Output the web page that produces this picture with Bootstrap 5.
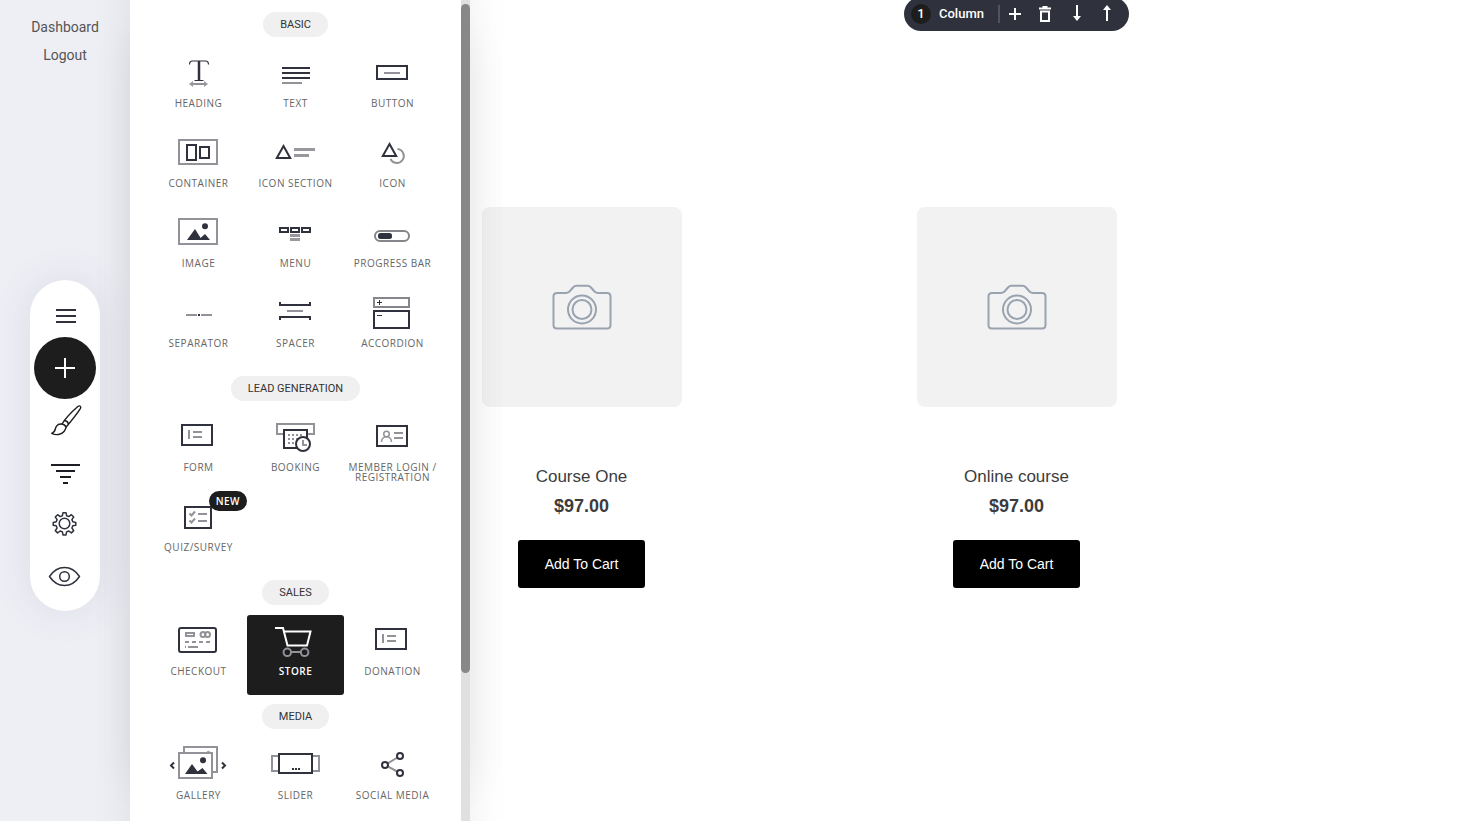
<!DOCTYPE html>
<html lang="en">
<head>
<meta charset="utf-8">
<meta name="viewport" content="width=device-width, initial-scale=1">
<title>Page Editor</title>
<link href="https://cdn.jsdelivr.net/npm/bootstrap@5.3.0/dist/css/bootstrap.min.css" rel="stylesheet">
<style>
body{font-family:"Liberation Sans",Arial,sans-serif;background:#fff;color:#3c3c3c}
.editor{height:100vh}
.rail{width:130px;background:#eeeff5}
.rail-links{padding-top:13px;font:14px/28px Roboto,sans-serif}
.rail-links a{color:#555;text-decoration:none}
.dock{width:70px;padding:10px 0 9px;border-radius:35px;background:#fff;box-shadow:0 0 40px rgba(60,65,100,.1)}
.dock button{width:62px;height:52px;padding:0;border:0;background:none;color:#2f303a}
.dock .dock-on{height:62px;margin:-5px 0;border-radius:50%;background:#1d1d1d;color:#fff;position:relative}
.panel{left:130px;top:0;bottom:0;width:340px;background:#fff;box-shadow:0 -40px 40px rgba(0,0,0,.07),0 40px 40px rgba(0,0,0,.07)}
.panel-list{padding:3px 20px 0;overflow:hidden}
.group-name{margin:9px 0 10px;padding:0 17px;border-radius:13px;background:#f0f0f0;color:#333;font:11px/25px Roboto,sans-serif}
.tiles{display:grid;grid-template-columns:repeat(3,1fr)}
.tile{height:80px;padding:0;border:0;border-radius:3px;background:none;color:#666;font:10px/10px "Open Sans",sans-serif;letter-spacing:.05em;text-transform:uppercase}
.tile svg{display:block;width:97px;height:51px}
.tile span{display:block}
.tile-on{background:#1d1d1d;color:#fff;font-weight:600}
.tile .tile-new{right:0;top:0;padding:0 7px;border-radius:10px;background:#1d1d1d;color:#fff;font-weight:600;line-height:20px}
.track{width:9px;background:#e0e0e0}
.thumb{margin-top:4px;height:calc(100% - 152px);border-radius:5px;background:#888}
svg{fill:none}
.d{stroke:#2f313c;stroke-width:2}
.g{stroke:#929298;stroke-width:2}
.df{fill:#2f313c}
.gf{fill:#98989e}
.w{fill:#fff}
.stage{padding-right:12px;overflow:hidden}
.products{max-width:870px}
.tool-row{height:207px}
.column-bar{height:34px;width:225px;margin-top:-3px;padding:0 7px;border-radius:17px;background:#2f313c;color:#fff;font:500 13px/20px Roboto,sans-serif}
.column-bar button{width:30px;height:24px;padding:0;border:0;background:none;color:#fff;display:grid;place-items:center}
.count{width:20px;height:20px;border-radius:50%;background:#1d1d1d;text-align:center}
.move-pair{margin-left:2px}
.rule{width:2px;height:18px;background:#51535e}
.photo{width:200px;height:200px;border-radius:8px;background:#f2f2f2}
.product-name{margin:58px 0 0;font-size:17px;line-height:24px;font-weight:400}
.price{font-size:18px;line-height:24px;margin:5px 0 22px;font-weight:700}
.cart-btn{height:48px;padding:0 27px;border:0;border-radius:3px;background:#000;color:#fff;font-size:14px}
</style>
</head>
<body>
<div class="editor d-flex position-relative overflow-hidden">
  <aside class="rail d-flex flex-column align-items-center flex-shrink-0">
    <nav class="rail-links d-flex flex-column align-items-center"><a href="#">Dashboard</a><a href="#">Logout</a></nav>
    <div class="dock my-auto d-flex flex-column align-items-center">
      <button type="button" aria-label="Menu"><svg width="62" height="52"><path d="M22 20h20M22 26h20M22 32h20" class="d"/></svg></button>
      <button type="button" class="dock-on" aria-label="Add element"><svg width="62" height="62"><path d="M21 31h20M31 21v20" stroke="#fff" stroke-width="2"/></svg></button>
      <button type="button" aria-label="Design"><svg width="62" height="52" stroke="#1d1d1d" stroke-width="1.400" stroke-linejoin="round"><path d="M28 30C31 25 37 18.500 43.800 12.500C45.800 11 47.600 12.500 46.300 14.700C42 21.500 36.500 28 32 33.300C31.500 31.500 30 30.300 28 30Z"/><path d="M30.500 26.500c2 .3 3.600 1.800 4 3.500"/><path d="M28 30C24.500 29.700 22 31.700 21.300 35C20.900 37 19.500 38.700 17.700 39.300C22 41.500 27.500 40.800 30 37.500C31 36 31.800 34.700 32 33.300"/></svg></button>
      <button type="button" aria-label="Layout"><svg width="62" height="52"><path d="M17 19h29M22 25h19M26 31h11M29 37h5" class="d" style="stroke:#1d1d24"/></svg></button>
      <button type="button" aria-label="Settings"><svg width="62" height="52" stroke="#2f313c" stroke-width="1.500" stroke-linejoin="round"><circle cx="30.500" cy="25.500" r="5.300"/><path d="M29 14.700h3l.6 3 2.200.9 2.600-1.900 2.300 2.300-1.800 2.600.9 2.200 3 .6v2.800l-3 .6-.9 2.200 1.800 2.600-2.300 2.300-2.600-1.900-2.200.9-.6 3h-3l-.6-3-2.200-.9-2.600 1.900-2.300-2.300 1.800-2.600-.9-2.200-3-.6v-2.800l3-.6.9-2.200-1.800-2.600 2.300-2.300 2.600 1.900 2.200-.9z"/></svg></button>
      <button type="button" aria-label="Preview"><svg width="62" height="52" stroke="#2f313c" stroke-width="1.500" stroke-linejoin="round"><path d="M15.500 26.500C19.500 20.500 24.500 17.500 30.500 17.500S41.500 20.500 45.500 26.500C41.500 32.500 36.500 35.500 30.500 35.500S19.500 32.500 15.500 26.500Z"/><circle cx="30.500" cy="26.500" r="4.800"/></svg></button>
    </div>
  </aside>

  <main class="stage flex-grow-1">
    <div class="products row g-0 mx-auto">
      <div class="col-6 d-flex flex-column align-items-center">
        <div class="tool-row"></div>
        <div class="photo d-grid align-items-center justify-content-center"><svg width="60" height="46" stroke="#99a3b0" stroke-width="2"><path d="M5 9H13.500Q16 9 17.500 7.500L21 3.500Q22.500 1.700 24.500 1.700H35.500Q37.500 1.700 39 3.500L42.500 7.500Q44 9 46.500 9H55Q58.500 9 58.500 12.500V41Q58.500 44.500 55 44.500H5Q1.500 44.500 1.500 41V12.500Q1.500 9 5 9Z"/><circle cx="30" cy="25.500" r="14"/><circle cx="30" cy="25.500" r="9.500"/></svg></div>
        <h3 class="product-name">Course One</h3>
        <p class="price">$97.00</p>
        <button type="button" class="cart-btn">Add To Cart</button>
      </div>
      <div class="col-6 d-flex flex-column align-items-center">
        <div class="tool-row">
          <div class="column-bar d-flex align-items-center">
            <span class="count">1</span><span class="ms-2 me-auto">Column</span>
            <span class="rule"></span>
            <button type="button" aria-label="Add column"><svg width="14" height="14" stroke="#fff" stroke-width="2"><path d="M1 7h12M7 1v12"/></svg></button>
            <button type="button" aria-label="Delete column"><svg width="14" height="18" stroke="#fff" stroke-width="2"><path d="M1 3.500h12M4.500 2h5M3 6.500h8v9.500H3z"/></svg></button>
            <div class="move-pair d-flex">
              <button type="button" aria-label="Move down"><svg width="14" height="18"><path d="M6 0h2v11h3l-4 5-4-5h3z" fill="#fff"/></svg></button>
              <button type="button" aria-label="Move up"><svg width="14" height="18"><path d="M6 16h2V5h3L7 0 3 5h3z" fill="#fff"/></svg></button>
            </div>
          </div>
        </div>
        <div class="photo d-grid align-items-center justify-content-center"><svg width="60" height="46" stroke="#99a3b0" stroke-width="2"><path d="M5 9H13.500Q16 9 17.500 7.500L21 3.500Q22.500 1.700 24.500 1.700H35.500Q37.500 1.700 39 3.500L42.500 7.500Q44 9 46.500 9H55Q58.500 9 58.500 12.500V41Q58.500 44.500 55 44.500H5Q1.500 44.500 1.500 41V12.500Q1.500 9 5 9Z"/><circle cx="30" cy="25.500" r="14"/><circle cx="30" cy="25.500" r="9.500"/></svg></div>
        <h3 class="product-name">Online course</h3>
        <p class="price">$97.00</p>
        <button type="button" class="cart-btn">Add To Cart</button>
      </div>
    </div>
  </main>

  <!-- Element picker slides over the page canvas -->
  <section class="panel position-absolute d-flex">
    <div class="panel-list flex-grow-1">
      <div class="d-flex justify-content-center"><h2 class="group-name">BASIC</h2></div>
      <div class="tiles">
        <button type="button" class="tile d-flex flex-column align-items-center"><svg viewBox="0 0 97 51"><path d="M39.500 17.500q0-3.500 3-3.500h13q3 0 3 3.500M49 14v19M44.500 33.500h9" stroke="#2f313c" stroke-width="1.200"/><path d="M49 14v19.500" stroke="#2f313c" stroke-width="2.500"/><path d="M41 37h15" class="g"/><path d="M39 37l4-3v6zM58 37l-4-3v6z" class="gf"/></svg><span>Heading</span></button>
        <button type="button" class="tile d-flex flex-column align-items-center"><svg viewBox="0 0 97 51"><path d="M35 21h28M35 26h28M35 31h28" class="d"/><path d="M35 36h20" class="g"/></svg><span>Text</span></button>
        <button type="button" class="tile d-flex flex-column align-items-center"><svg viewBox="0 0 97 51"><path d="M33 19h30v13H33z" class="d"/><path d="M40 26h16" class="g"/></svg><span>Button</span></button>

        <button type="button" class="tile d-flex flex-column align-items-center"><svg viewBox="0 0 97 51"><path d="M29 13h38v24H29z" class="g"/><path d="M37 18h9v15h-9zM50 20h9v11h-9z" class="d"/></svg><span>Container</span></button>
        <button type="button" class="tile d-flex flex-column align-items-center"><svg viewBox="0 0 97 51"><path d="M36.500 19L43.200 31H29.800z" class="d"/><path d="M47 21h21v3H47zM47 27h15v3H47z" class="gf"/></svg><span>Icon section</span></button>
        <button type="button" class="tile d-flex flex-column align-items-center"><svg viewBox="0 0 97 51"><path d="M53.500 22a7 7 0 1 1-7 10" class="g"/><path d="M45.500 17L52.200 29H38.800z" class="d"/></svg><span>Icon</span></button>

        <button type="button" class="tile d-flex flex-column align-items-center"><svg viewBox="0 0 97 51"><path d="M29 12h38v25H29z" class="g"/><path d="M37 33l8-11 5 8 .5 1 4.500-4 5 6z" class="df"/><circle cx="55" cy="19.300" r="3" class="df"/></svg><span>Image</span></button>
        <button type="button" class="tile d-flex flex-column align-items-center"><svg viewBox="0 0 97 51"><path d="M33 21h8v4h-8zM44 21h8v4h-8zM55 21h8v4h-8z" class="d"/><path d="M43 27h10v3H43zM43 31h10v3H43z" class="gf"/></svg><span>Menu</span></button>
        <button type="button" class="tile d-flex flex-column align-items-center"><svg viewBox="0 0 97 51"><rect x="31" y="24" width="34" height="10" rx="5" class="g" style="stroke:#85858b"/><rect x="34" y="26" width="14" height="6" rx="2.500" class="df"/></svg><span>Progress bar</span></button>

        <button type="button" class="tile d-flex flex-column align-items-center"><svg viewBox="0 0 97 51"><path d="M36 28h11M51 28h11" class="g"/><path d="M48 28h2" class="d"/></svg><span>Separator</span></button>
        <button type="button" class="tile d-flex flex-column align-items-center"><svg viewBox="0 0 97 51"><path d="M33 15v3h30v-3M33 33v-3h30v3" class="d"/><path d="M40 24h16" class="g"/></svg><span>Spacer</span></button>
        <button type="button" class="tile d-flex flex-column align-items-center"><svg viewBox="0 0 97 51"><path d="M30 11h35v9H30z" class="g" style="stroke:#85858b"/><path d="M30 24h35v17H30z" class="d"/><path d="M33 15.500h5M35.500 13v5M33 28.500h5" stroke="#2f313c"/></svg><span>Accordion</span></button>
      </div>

      <div class="d-flex justify-content-center"><h2 class="group-name">LEAD GENERATION</h2></div>
      <div class="tiles">
        <button type="button" class="tile d-flex flex-column align-items-center"><svg viewBox="0 0 97 51"><path d="M32 14h30v20H32z" class="d"/><path d="M39 19v9M43 21h9M43 26h9" class="g"/></svg><span>Form</span></button>
        <button type="button" class="tile d-flex flex-column align-items-center"><svg viewBox="0 0 97 51"><path d="M30 13h37v10H30z" class="g"/><path d="M37 19h23v18H37z" class="d w"/><path d="M41 24h14M41 28h14M41 32h9" class="g" stroke-dasharray="2 2"/><circle cx="56" cy="33" r="7" class="d w"/><path d="M56 29v5h4" class="g"/></svg><span>Booking</span></button>
        <button type="button" class="tile d-flex flex-column align-items-center"><svg viewBox="0 0 97 51"><path d="M33 15h30v20H33z" class="d"/><g class="g" style="stroke-width:1.500"><circle cx="42.500" cy="23" r="2.800"/><path d="M37.500 31c0-7 10-7 10 0"/></g><path d="M50 22h9M50 27h9" class="g"/></svg><span>Member login / registration</span></button>
        <button type="button" class="tile position-relative d-flex flex-column align-items-center"><svg viewBox="0 0 97 51"><path d="M35 16h26v21H35z" class="d"/><path d="M48 23h9M48 30h9" class="g"/><path d="M39.500 22.500l2 2 3.500-4M39.500 29.500l2 2 3.500-4" class="g"/></svg><span>Quiz/Survey</span><span class="tile-new position-absolute">New</span></button>
      </div>

      <div class="d-flex justify-content-center"><h2 class="group-name">SALES</h2></div>
      <div class="tiles">
        <button type="button" class="tile d-flex flex-column align-items-center"><svg viewBox="0 0 97 51"><rect x="29" y="13" width="37" height="24" rx="2" class="d"/><g class="g"><path d="M36 18h8v3h-8z"/><circle cx="53" cy="19.500" r="2.500"/><circle cx="57.500" cy="19.500" r="2.500"/></g><path d="M35 27h25" class="g" stroke-dasharray="4 3"/><path d="M35 32h1M38 32h10" class="g"/></svg><span>Checkout</span></button>
        <button type="button" class="tile tile-on d-flex flex-column align-items-center"><svg viewBox="0 0 97 51"><path d="M28 13h8l4.500 17.500h19.500l3.500-14H37" stroke="#fff" stroke-width="2"/><path d="M44 37h10" class="g"/><circle cx="40.300" cy="37.300" r="3.800" class="g"/><circle cx="57.600" cy="37.300" r="3.800" class="g"/></svg><span>Store</span></button>
        <button type="button" class="tile d-flex flex-column align-items-center"><svg viewBox="0 0 97 51"><path d="M32 14h30v20H32z" class="d"/><path d="M39 19v9M43 21h9M43 26h9" class="g"/></svg><span>Donation</span></button>
      </div>

      <div class="d-flex justify-content-center"><h2 class="group-name">MEDIA</h2></div>
      <div class="tiles">
        <button type="button" class="tile d-flex flex-column align-items-center"><svg viewBox="0 0 97 51"><path d="M34 13V8h33v25h-4" class="g"/><path d="M29 14h33v25H29z" class="g"/><path d="M35 35l7-10 5.500 7.500 5-3.500 5 6z" class="df"/><circle cx="53" cy="21.300" r="3" class="df"/><path d="M57 13q1-1.500 3 0" class="g" style="stroke-width:1"/><path d="M24 23.500l-3 3 3 3M72 23.500l3 3-3 3" class="d"/></svg><span>Gallery</span></button>
        <button type="button" class="tile d-flex flex-column align-items-center"><svg viewBox="0 0 97 51"><path d="M31 17h-6v15h6M66 17h6v15h-6" class="g"/><path d="M32 15h33v19H32zM45 30h2M48 30h2M51 30h2" class="d"/></svg><span>Slider</span></button>
        <button type="button" class="tile d-flex flex-column align-items-center"><svg viewBox="0 0 97 51"><path d="M56 17L41 26l15 8" class="g"/><g class="d w"><circle cx="41" cy="26" r="3"/><circle cx="56" cy="17" r="3"/><circle cx="56" cy="34" r="3"/></g></svg><span>Social media</span></button>
      </div>
    </div>
    <div class="track flex-shrink-0"><div class="thumb"></div></div>
  </section>
</div>
<script src="https://cdn.jsdelivr.net/npm/bootstrap@5.3.0/dist/js/bootstrap.bundle.min.js"></script>
</body>
</html>
